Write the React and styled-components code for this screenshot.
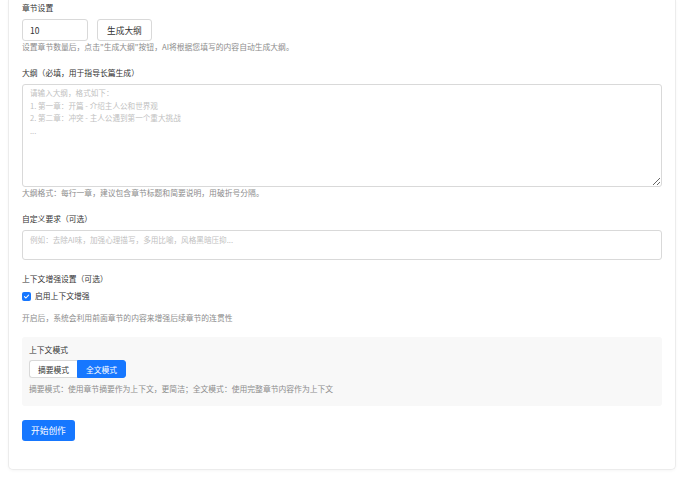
import React, { useState } from "react";
import styled, { createGlobalStyle } from "styled-components";

const Global = createGlobalStyle`
  html, body { margin: 0; padding: 0; background: #fff; }
  body { font-family: "Noto Sans CJK SC", "Noto Sans", sans-serif; color: #333; }
  * { box-sizing: border-box; }
`;

const Page = styled.div`
  padding: 0 14px 9px 8px;
`;

const Card = styled.div`
  background: #fff;
  border: 1px solid #ececec;
  border-top: none;
  border-radius: 0 0 5px 5px;
  box-shadow: 0 1px 3px rgba(0, 0, 0, 0.04);
  padding: 3px 13px 28px 13px;
  display: flex;
  flex-direction: column;
`;

const Section = styled.div`
  display: flex;
  flex-direction: column;
  margin-top: ${(p) => p.$mt || 0}px;
`;

const Label = styled.div`
  font-size: 7.8px;
  line-height: 10px;
  color: #333;
  margin-bottom: ${(p) => p.$mb ?? 6}px;
`;

const Hint = styled.div`
  font-size: 7.8px;
  line-height: 10px;
  color: #8c8c8c;
  margin-top: ${(p) => p.$mt ?? 1}px;
`;

const Row = styled.div`
  display: flex;
  align-items: center;
  gap: 9px;
`;

const NumInput = styled.input`
  width: 66px;
  height: 22px;
  border: 1px solid #d9d9d9;
  border-radius: 3px;
  padding: 0 7px;
  font-family: inherit;
  font-size: 8.5px;
  color: #333;
  outline: none;
`;

const Button = styled.button`
  height: 22px;
  padding: 0 9px;
  border: 1px solid #d9d9d9;
  border-radius: 3px;
  background: #fff;
  color: #333;
  font-family: inherit;
  font-size: 8.7px;
  cursor: pointer;
`;

const TextArea = styled.textarea`
  width: 100%;
  height: ${(p) => p.$h}px;
  border: 1px solid #d9d9d9;
  border-radius: 3px;
  padding: ${(p) => p.$pad || "2px 7px"};
  font-family: inherit;
  font-size: 7.6px;
  line-height: 12.6px;
  color: #333;
  outline: none;
  resize: ${(p) => (p.$resize ? "vertical" : "none")};
  display: block;
  &::placeholder { color: #bfbfbf; }
`;

const CheckRow = styled.label`
  display: flex;
  align-items: center;
  gap: 4px;
  font-size: 7.8px;
  line-height: 10px;
  color: #333;
  margin-top: 7px;
`;

const Box = styled.span`
  width: 9px;
  height: 9px;
  border-radius: 2px;
  background: #1677ff;
  display: inline-flex;
  align-items: center;
  justify-content: center;
`;

const Panel = styled.div`
  background: #f8f8f8;
  border-radius: 3px;
  padding: 8px 7px 12px;
  margin-top: 14px;
  display: flex;
  flex-direction: column;
`;

const Segment = styled.div`
  display: flex;
`;

const SegBtn = styled.button`
  height: 18px;
  width: ${(p) => p.$w}px;
  border: 1px solid ${(p) => (p.$active ? "#1677ff" : "#d9d9d9")};
  background: ${(p) => (p.$active ? "#1677ff" : "#fff")};
  color: ${(p) => (p.$active ? "#fff" : "#333")};
  font-family: inherit;
  font-size: 7.8px;
  padding: 0;
  cursor: pointer;
  border-radius: ${(p) => (p.$first ? "3px 0 0 3px" : "0 3px 3px 0")};
  ${(p) => (p.$first ? "border-right: none;" : "")}
`;

const Primary = styled.button`
  align-self: flex-start;
  height: 21px;
  padding: 0 9px;
  margin-top: 14px;
  border: none;
  border-radius: 3px;
  background: #1677ff;
  color: #fff;
  font-family: inherit;
  font-size: 8.7px;
  cursor: pointer;
`;

export default function App() {
  const [mode, setMode] = useState("full");
  return (
    <>
      <Global />
      <Page>
        <Card>
          <Section>
            <Label>章节设置</Label>
            <Row>
              <NumInput defaultValue="10" />
              <Button>生成大纲</Button>
            </Row>
            <Hint>设置章节数量后，点击"生成大纲"按钮，AI将根据您填写的内容自动生成大纲。</Hint>
          </Section>

          <Section $mt={16}>
            <Label>大纲（必填，用于指导长篇生成）</Label>
            <TextArea
              $h={103}
              $resize
              placeholder={"请输入大纲，格式如下：\n1. 第一章：开篇 - 介绍主人公和世界观\n2. 第二章：冲突 - 主人公遇到第一个重大挑战\n..."}
            />
            <Hint>大纲格式：每行一章，建议包含章节标题和简要说明，用破折号分隔。</Hint>
          </Section>

          <Section $mt={16}>
            <Label>自定义要求（可选）</Label>
            <TextArea $h={30} $pad="3px 7px" placeholder="例如：去除AI味，加强心理描写，多用比喻，风格黑暗压抑..." />
          </Section>

          <Section $mt={14}>
            <Label $mb={0}>上下文增强设置（可选）</Label>
            <CheckRow>
              <Box>
                <svg width="7" height="7" viewBox="0 0 12 12">
                  <path d="M2.5 6.2 L5 8.6 L9.6 3.6" fill="none" stroke="#fff" strokeWidth="1.8" strokeLinecap="round" strokeLinejoin="round" />
                </svg>
              </Box>
              启用上下文增强
            </CheckRow>
            <Hint $mt={12}>开启后，系统会利用前面章节的内容来增强后续章节的连贯性</Hint>
          </Section>

          <Panel>
            <Label $mb={5}>上下文模式</Label>
            <Segment>
              <SegBtn $w={48} $first $active={mode === "summary"} onClick={() => setMode("summary")}>摘要模式</SegBtn>
              <SegBtn $w={49} $active={mode === "full"} onClick={() => setMode("full")}>全文模式</SegBtn>
            </Segment>
            <Hint $mt={6}>摘要模式：使用章节摘要作为上下文，更简洁；全文模式：使用完整章节内容作为上下文</Hint>
          </Panel>

          <Primary>开始创作</Primary>
        </Card>
      </Page>
    </>
  );
}
